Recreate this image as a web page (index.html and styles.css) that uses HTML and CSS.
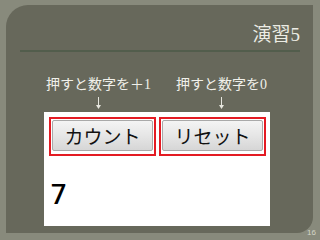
FILE: index.html
```html
<!DOCTYPE html>
<html lang="ja">
<head>
<meta charset="utf-8">
<link rel="stylesheet" href="styles.css">
</head>
<body>
<div class="slide">
  <div class="title">演習5</div>
  <div class="rule"></div>
  <div class="labels">
    <div class="label">
      <span>押すと数字を＋1</span>
      <svg class="arrow" width="7" height="12" viewBox="0 0 7 12"><line x1="3.5" y1="0" x2="3.5" y2="9" stroke="#e6e6de" stroke-width="1"/><polygon points="1,8 6,8 3.5,12" fill="#e6e6de"/></svg>
    </div>
    <div class="label">
      <span>押すと数字を0</span>
      <svg class="arrow" width="7" height="12" viewBox="0 0 7 12"><line x1="3.5" y1="0" x2="3.5" y2="9" stroke="#e6e6de" stroke-width="1"/><polygon points="1,8 6,8 3.5,12" fill="#e6e6de"/></svg>
    </div>
  </div>
  <div class="window">
    <div class="buttons">
      <div class="mark"><div class="btn">カウント</div></div>
      <div class="mark"><div class="btn">リセット</div></div>
    </div>
    <div class="count">7</div>
  </div>
</div>
<div class="page">16</div>
</body>
</html>
```
FILE: styles.css
```css
html, body {
  margin: 0;
  padding: 0;
}
body {
  width: 320px;
  height: 240px;
  overflow: hidden;
  background: #888a7c;
  position: relative;
  font-family: "Liberation Serif", "Noto Sans CJK JP", serif;
}
.slide {
  margin: 5px 0 0 6px;
  width: 307px;
  height: 228px;
  background: #67685b;
  border-radius: 22px 0 16px 0;
  display: flex;
  flex-direction: column;
  box-sizing: border-box;
}
.title {
  padding: 17px 13px 0 0;
  font-size: 19px;
  line-height: 25px;
  text-align: right;
  color: #ecece4;
}
.rule {
  margin: 3px 13px 0 14px;
  height: 2px;
  background: #525d4c;
}
.labels {
  display: flex;
  margin-top: 24px;
  padding-left: 40px;
  gap: 25px;
}
.label {
  display: flex;
  flex-direction: column;
  align-items: center;
  color: #f0f0ea;
  font-size: 14px;
  line-height: 18px;
}
.arrow {
  display: block;
  margin-top: 3px;
}
.window {
  margin: 3px 0 0 38px;
  width: 226px;
  height: 114px;
  background: #ffffff;
  box-sizing: border-box;
  padding: 5px 0 0 5px;
}
.buttons {
  display: flex;
  gap: 3px;
}
.mark {
  width: 107px;
  height: 39px;
  box-sizing: border-box;
  border: 2px solid #e31b23;
  padding: 1px 1px 3px 1px;
}
.btn {
  height: 100%;
  box-sizing: border-box;
  border: 1px solid #a9a9a9;
  border-radius: 2px;
  background: linear-gradient(#f4f4f4, #e6e6e6 50%, #d6d6d6);
  display: flex;
  align-items: center;
  justify-content: center;
  font-family: "Noto Sans CJK JP", sans-serif;
  font-size: 19px;
  color: #111111;
}
.count {
  margin: 24px 0 0 2px;
  font-family: Roboto, sans-serif;
  font-weight: 500;
  font-size: 27px;
  line-height: 30px;
  color: #000000;
}
.page {
  position: absolute;
  right: 4px;
  bottom: 3px;
  font-family: "Liberation Sans", sans-serif;
  font-size: 8px;
  line-height: 8px;
  color: #d4d6c8;
}
```
